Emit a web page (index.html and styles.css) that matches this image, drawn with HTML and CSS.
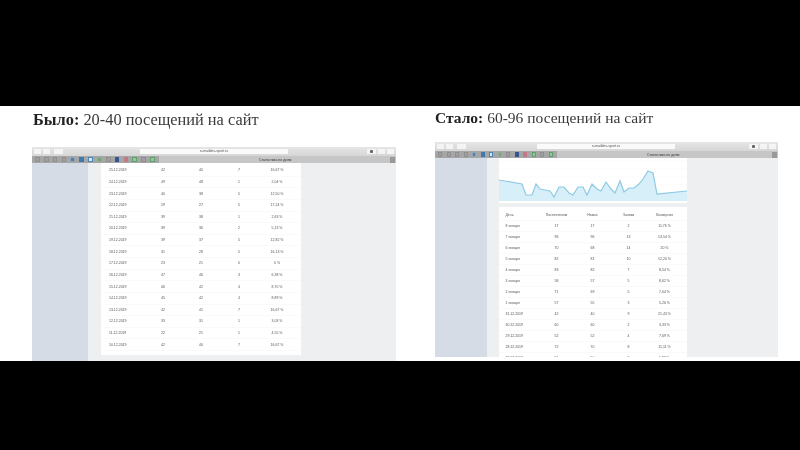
FILE: index.html
```html
<!DOCTYPE html>
<html>

<head>
    <title>Было / Стало</title>
    <meta charset="utf-8">
    <link rel="stylesheet" href="styles.css">
</head>

<body>
    <div class='stage'>

        <!-- Before -->
        <section class='slide slide-before'>
            <h2 class='slide-title'><b>Было:</b> 20-40 посещений на сайт</h2>
            <div class='window'>
                <div class='titlebar'>
                    <span class='btn'></span><span class='btn'></span><span class='btn btn-tab'></span>
                    <span class='url'>e-maildev-sport.ru</span>
                    <span class='btn btn-dot'></span><span class='btn'></span><span class='btn'></span>
                </div>
                <div class='toolbar'>
                    <div class='icons'>
                        <i></i><i></i><i></i><i></i><i class='small-blue'></i><i class='blue'></i><i class='pale'></i><i class='small-green'></i><i></i><i class='navy'></i><i class='pink'></i><i class='green'></i><i></i><i class='green'></i>
                    </div>
                    <span class='tab-title'>Статистика по дням</span>
                    <span class='tab-add'></span>
                </div>
                <div class='content'>
                    <div class='sidebar'></div>
                    <div class='main'>
                        <div class='card'>
                            <div class='row'><span>25.12.2019</span><span>42</span><span>40</span><span>7</span><span>16,67 %</span></div>
                            <div class='row'><span>24.12.2019</span><span>49</span><span>48</span><span>1</span><span>2,04 %</span></div>
                            <div class='row'><span>23.12.2019</span><span>40</span><span>38</span><span>5</span><span>12,50 %</span></div>
                            <div class='row'><span>22.12.2019</span><span>29</span><span>27</span><span>5</span><span>17,24 %</span></div>
                            <div class='row'><span>21.12.2019</span><span>39</span><span>38</span><span>1</span><span>2,63 %</span></div>
                            <div class='row'><span>20.12.2019</span><span>39</span><span>36</span><span>2</span><span>5,13 %</span></div>
                            <div class='row'><span>19.12.2019</span><span>39</span><span>37</span><span>5</span><span>12,82 %</span></div>
                            <div class='row'><span>18.12.2019</span><span>31</span><span>28</span><span>5</span><span>16,13 %</span></div>
                            <div class='row'><span>17.12.2019</span><span>23</span><span>21</span><span>0</span><span>0 %</span></div>
                            <div class='row'><span>16.12.2019</span><span>47</span><span>46</span><span>3</span><span>6,38 %</span></div>
                            <div class='row'><span>15.12.2019</span><span>46</span><span>42</span><span>4</span><span>8,70 %</span></div>
                            <div class='row'><span>14.12.2019</span><span>45</span><span>42</span><span>4</span><span>8,89 %</span></div>
                            <div class='row'><span>13.12.2019</span><span>42</span><span>41</span><span>7</span><span>16,67 %</span></div>
                            <div class='row'><span>12.12.2019</span><span>33</span><span>31</span><span>1</span><span>3,03 %</span></div>
                            <div class='row'><span>11.12.2019</span><span>22</span><span>21</span><span>1</span><span>4,55 %</span></div>
                            <div class='row'><span>10.12.2019</span><span>42</span><span>40</span><span>7</span><span>16,67 %</span></div>
                        </div>
                    </div>
                </div>
            </div>
        </section>

        <!-- After -->
        <section class='slide slide-after'>
            <h2 class='slide-title'><b>Стало:</b> 60-96 посещений на сайт</h2>
            <div class='window'>
                <div class='titlebar'>
                    <span class='btn'></span><span class='btn'></span><span class='btn btn-tab'></span>
                    <span class='url'>e-maildev-sport.ru</span>
                    <span class='btn btn-dot'></span><span class='btn'></span><span class='btn'></span>
                </div>
                <div class='toolbar'>
                    <div class='icons'>
                        <i></i><i></i><i></i><i></i><i class='small-blue'></i><i class='blue'></i><i class='pale'></i><i class='small-green'></i><i></i><i class='navy'></i><i class='pink'></i><i class='green'></i><i></i><i class='green'></i>
                    </div>
                    <span class='tab-title'>Статистика по дням</span>
                    <span class='tab-add'></span>
                </div>
                <div class='content'>
                    <div class='sidebar'></div>
                    <div class='main'>
                        <div class='chart'>
                            <svg viewBox='0 0 188 45' width='188' height='45'>
                                <path class='grid' d='M0 3H188M0 11H188M0 19H188M0 27H188M0 35H188'/>
                                <path class='area' d='M0 22 23 26 27 37 33 37 37 26 41 31 46 32 51 33 55 39 60 29 65 29 70 35 74 37 79 29 84 29 88 37 93 26 98 31 102 33 107 24 112 31 116 35 121 23 125 34 130 30 135 30 140 26 144 21 149 13 154 15 158 36 188 33V43H0Z'/>
                                <path class='line' d='M0 22 23 26 27 37 33 37 37 26 41 31 46 32 51 33 55 39 60 29 65 29 70 35 74 37 79 29 84 29 88 37 93 26 98 31 102 33 107 24 112 31 116 35 121 23 125 34 130 30 135 30 140 26 144 21 149 13 154 15 158 36 188 33'/>
                            </svg>
                        </div>
                        <div class='card'>
                            <div class='row'><span>День</span><span>Посетителям</span><span>Новых</span><span>Заявки</span><span>Конверсия</span></div>
                            <div class='row'><span>8 января</span><span>17</span><span>17</span><span>2</span><span>11,76 %</span></div>
                            <div class='row'><span>7 января</span><span>96</span><span>96</span><span>13</span><span>13,54 %</span></div>
                            <div class='row'><span>6 января</span><span>70</span><span>68</span><span>14</span><span>20 %</span></div>
                            <div class='row'><span>5 января</span><span>82</span><span>81</span><span>10</span><span>12,20 %</span></div>
                            <div class='row'><span>4 января</span><span>83</span><span>82</span><span>7</span><span>8,54 %</span></div>
                            <div class='row'><span>3 января</span><span>58</span><span>57</span><span>5</span><span>8,62 %</span></div>
                            <div class='row'><span>2 января</span><span>71</span><span>69</span><span>5</span><span>7,04 %</span></div>
                            <div class='row'><span>1 января</span><span>57</span><span>55</span><span>3</span><span>5,26 %</span></div>
                            <div class='row'><span>31.12.2019</span><span>42</span><span>40</span><span>9</span><span>21,43 %</span></div>
                            <div class='row'><span>30.12.2019</span><span>60</span><span>60</span><span>2</span><span>3,33 %</span></div>
                            <div class='row'><span>29.12.2019</span><span>52</span><span>52</span><span>4</span><span>7,69 %</span></div>
                            <div class='row'><span>28.12.2019</span><span>72</span><span>70</span><span>8</span><span>11,11 %</span></div>
                            <div class='row'><span>27.12.2019</span><span>51</span><span>50</span><span>3</span><span>5,88 %</span></div>
                        </div>
                    </div>
                </div>
            </div>
        </section>

    </div>
</body>

</html>
```

FILE: styles.css
```css
* {
    box-sizing: border-box;
}

html,
body {
    height: 100%;
}

body {
    margin: 0;
    padding-top: 106px;
    background-color: #000;
    overflow: hidden;
}

.stage {
    display: flex;
    height: 255px;
    background-color: #fff;
    overflow: hidden;
}

.slide {
    display: flex;
    flex-direction: column;
}

.slide-before {
    width: 364px;
    margin-left: 32px;
}

.slide-after {
    width: 343px;
    margin-left: 39px;
    padding-bottom: 4px;
}

.slide-title {
    margin: 0;
    height: 41px;
    padding: 4px 0 0 1px;
    font-family: "Liberation Serif", serif;
    font-size: 16.35px;
    line-height: 20px;
    font-weight: normal;
    white-space: nowrap;
    color: #3a3a3a;
    filter: blur(0.45px);
}

.slide-title b {
    color: #222;
}

.slide-after .slide-title {
    height: 36px;
    padding: 2px 0 0;
    font-size: 15.5px;
}

/* browser window */
.window {
    flex: 1;
    display: flex;
    flex-direction: column;
    min-height: 0;
    overflow: hidden;
    background-color: #eeeff1;
    font-family: "Liberation Sans", sans-serif;
    font-size: 3.5px;
    color: #555;
    filter: blur(0.6px);
}

.titlebar {
    display: flex;
    align-items: center;
    gap: 2px;
    height: 9px;
    padding: 0 2px;
    flex-shrink: 0;
    background: linear-gradient(#e6e6e6, #d6d6d6);
}

.btn {
    width: 7px;
    height: 5px;
    flex-shrink: 0;
    background-color: #f4f4f4;
}

.btn-tab {
    width: 9px;
    margin-left: 2px;
}

.btn-dot {
    width: 9px;
    background: radial-gradient(circle, #666 1.3px, #f4f4f4 1.8px);
}

.url {
    height: 5px;
    margin: 0 auto 0 75px;
    width: 148px;
    line-height: 5px;
    text-align: center;
    background-color: #fafafa;
}

.slide-after .url {
    margin-left: 69px;
    width: 138px;
}

.toolbar {
    display: flex;
    align-items: center;
    height: 7px;
    flex-shrink: 0;
    background-color: #c6c6c6;
}

.icons {
    display: flex;
    align-items: center;
    width: 127px;
    height: 7px;
    padding-left: 3px;
    flex-shrink: 0;
    background-color: #a6a6a6;
}

.slide-after .icons {
    width: 122px;
}

.icons i {
    display: block;
    width: 5px;
    height: 5px;
    margin-right: 4.2px;
    background-color: #a0a0a0;
    border: 1px solid #8f8f8f;
}

.icons .small-blue {
    background-color: #4f7fae;
    border-color: #92a5b8;
}

.icons .blue {
    background-color: #3f79ad;
    border-color: #3f79ad;
}

.icons .pale {
    background-color: #d8e6f0;
    border-color: #4a86b8;
}

.icons .small-green {
    background-color: #6fa96f;
    border-color: #98a998;
}

.icons .navy {
    background-color: #34558f;
    border-color: #34558f;
}

.icons .pink {
    background-color: #c07a85;
    border-color: #c07a85;
}

.icons .green {
    background-color: #9cc49c;
    border-color: #5da26a;
}

.tab-title {
    margin-left: 100px;
    color: #333;
    white-space: nowrap;
}

.slide-after .tab-title {
    margin-left: 90px;
}

.tab-add {
    width: 5px;
    height: 6px;
    margin-left: auto;
    margin-right: 1px;
    background-color: #999;
}

.content {
    flex: 1;
    display: flex;
    min-height: 0;
}

.sidebar {
    width: 56px;
    flex-shrink: 0;
    background-color: #d5dce6;
}

.slide-after .sidebar {
    width: 52px;
}

.main {
    width: 200px;
    margin-left: 13px;
}

.slide-after .main {
    width: 188px;
    margin-left: 12px;
}

/* table card */
.card {
    padding: 2px 0 3.6px;
    background-color: #fff;
}

.slide-after .card {
    padding: 3px 0 0;
}

.row {
    display: grid;
    grid-template-columns: 35px repeat(4, 38px);
    align-items: center;
    height: 11.64px;
    padding-left: 8px;
    border-bottom: 1px solid #fafafa;
    white-space: nowrap;
}

.slide-after .row {
    grid-template-columns: 33px repeat(4, 36px);
    height: 10.97px;
    padding-left: 6.5px;
}

.row span {
    text-align: center;
}

.row span:first-child {
    text-align: left;
}

/* chart */
.chart {
    height: 45px;
    margin-bottom: 4px;
    background-color: #fff;
}

.chart svg {
    display: block;
}

.grid {
    fill: none;
    stroke: #f6f6f6;
    stroke-width: 0.5;
}

.area {
    fill: #d6eff8;
}

.line {
    fill: none;
    stroke: #8ccbe2;
    stroke-width: 1.2;
}
```
